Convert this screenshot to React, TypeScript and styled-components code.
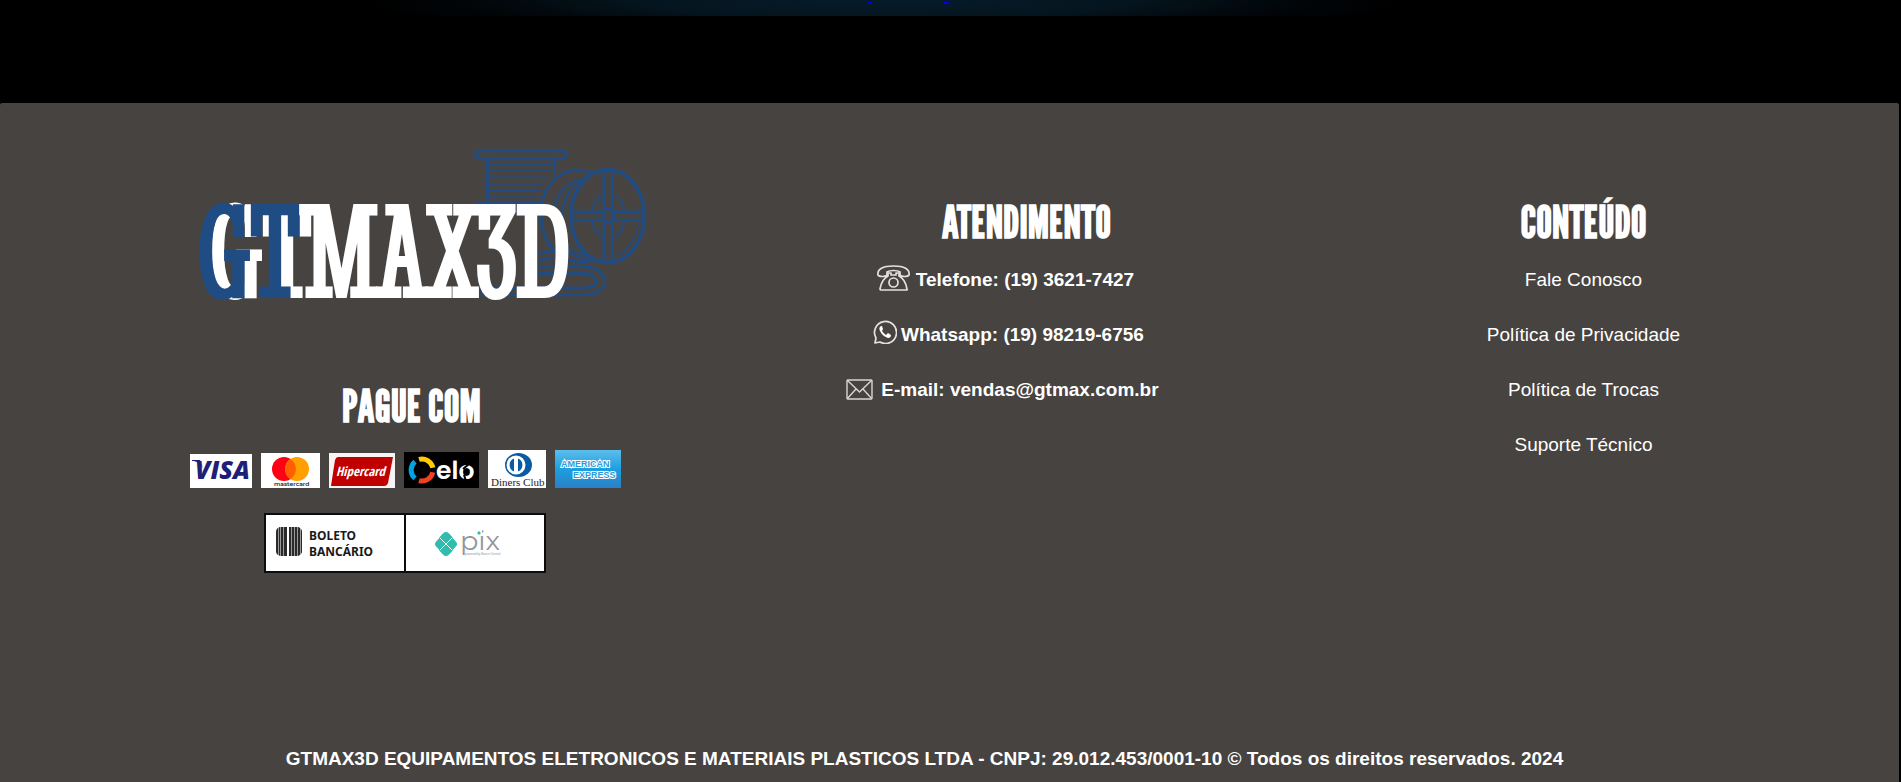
import React from "react";
import styled, { createGlobalStyle } from "styled-components";

const GlobalStyle = createGlobalStyle`
  *, *::before, *::after { box-sizing: border-box; }
  body {
    margin: 0;
    background: #000;
    color: #fff;
    font-family: Arial, "Liberation Sans", sans-serif;
  }
`;

const Page = styled.div`
  background: #000;
`;

const Banner = styled.div`
  display: flex;
  justify-content: center;
  gap: 72px;
  height: 16px;
  margin: 0 26% 0 19%;
  padding: 2px 0 0 48px;
  background: radial-gradient(ellipse 50% 260% at 50% 0, #061b2a 0%, #05151f 45%, #010508 80%, #000 100%);
`;

const BannerMark = styled.span`
  width: 5px;
  height: 2px;
  background: #0000ee;
`;

const FooterBox = styled.footer`
  margin: 87px 2px 0 0;
  padding: 27px 0 7px;
  border-radius: 2px 2px 0 0;
  background: #474340;
`;

const Columns = styled.div`
  display: grid;
  grid-template-columns: 59fr 60fr 56fr;
  padding: 0 2% 0 6%;
`;

const Column = styled.section<{ $top?: number; $indent?: number }>`
  display: flex;
  flex-direction: column;
  align-items: center;
  padding: ${(p) => p.$top ?? 0}px 0 0 ${(p) => p.$indent ?? 0}px;
`;

const Heading = styled.h2<{ $indent?: number }>`
  margin: 0 0 2px;
  padding-left: ${(p) => p.$indent ?? 0}px;
  font-family: "League Gothic", Anton, "Roboto Condensed", sans-serif;
  font-size: 44px;
  font-weight: 700;
  line-height: 56px;
`;

const List = styled.ul`
  margin: 0;
  padding: 0;
  list-style: none;
  text-align: center;
  font-size: 19px;
  line-height: 55px;
`;

const ContactItem = styled.li<{ $gap: number; $indent: number }>`
  display: flex;
  align-items: center;
  justify-content: center;
  gap: ${(p) => p.$gap}px;
  height: 55px;
  padding-left: ${(p) => p.$indent}px;
  font-weight: 700;
`;

const FooterLink = styled.a`
  color: #fff;
  text-decoration: none;
`;

const Cards = styled.div`
  display: flex;
  align-items: flex-end;
  gap: 9px;
  margin-top: 14px;
  padding-right: 5px;
`;

const Slips = styled.div`
  display: flex;
  gap: 2px;
  margin: 25px 6px 0 0;
  padding: 2px;
  background: #0c0c0c;
`;

const Art = styled.svg<{ $raise?: number }>`
  display: block;
  flex: none;
  overflow: hidden;
  margin-bottom: ${(p) => p.$raise ?? 0}px;
`;

const Copyright = styled.p`
  margin: 170px 0 0;
  padding-right: 50px;
  text-align: center;
  font-size: 19px;
  font-weight: 700;
  line-height: 32px;
`;

const BLUE = "#204c84";

function Spools() {
  return (
    <svg x="0" y="0" width="480" height="190" viewBox="0 0 1440 570" fill="none" stroke={BLUE} strokeWidth="9">
      <rect x="887" y="62" width="272" height="24" rx="12" />
      <path d="M923 86V212M1124 86V130" />
      <path strokeWidth="5" d="M928 104H1120M928 123H1122M928 142H1106M928 162H1092M928 181H1082M928 198H1078" />
      <path d="M888 218H1086M900 240H1080" />
      <path d="M1232 128C1170 104 1112 140 1092 196C1070 268 1090 330 1128 366C1160 396 1200 402 1238 390" />
      <path d="M1216 148C1160 150 1122 192 1122 260M1210 150C1170 170 1146 212 1148 262" strokeWidth="7" />
      <path d="M1160 348C1180 366 1200 372 1216 370" strokeWidth="7" />
      <ellipse cx="1283" cy="258" rx="110" ry="139" strokeWidth="11" />
      <path d="M1272 122V236M1297 122V236M1272 278V392M1297 278V392M1176 246H1268M1176 271H1268M1300 246H1392M1300 271H1392" />
      <ellipse cx="1285" cy="257" rx="16" ry="21" />
      <path strokeWidth="6" d="M1266 196C1250 204 1240 220 1238 240M1304 196C1320 204 1330 220 1332 240M1266 320C1250 312 1240 296 1238 276M1304 320C1320 312 1330 296 1332 276" />
      <path strokeWidth="4" d="M1374 280C1368 324 1346 360 1312 376" />
      <path d="M1120 366H1090C1054 366 1054 410 1090 410H1210C1290 410 1300 494 1214 494H900" />
      <path d="M1120 386H1096C1080 388 1080 392 1096 392M1060 430H1206C1262 430 1266 474 1206 474H890" />
      <path d="M1150 366L1240 394" strokeWidth="7" />
    </svg>
  );
}

function Logo() {
  const face = `"Stint Ultra Condensed", "Roboto Condensed", "Liberation Serif", serif`;
  return (
    <Art width="480" height="190" viewBox="-12 0 480 190" role="img">
      <Spools />
      <g fontFamily={face} fontSize="134" fontWeight="700">
        <text x="30" y="166" fill="#fff">GT</text>
        <text x="18" y="166" fill={BLUE}>GT</text>
        <text x="126" y="166" fill="#fff">MAX3D</text>
      </g>
    </Art>
  );
}

function Visa() {
  return (
    <Art width="62" height="34">
      <rect width="62" height="34" fill="#fff" />
      <text x="5" y="25" fontFamily="'Open Sans', sans-serif" fontSize="25" fontWeight="800" fontStyle="italic" fill="#1f1f78">VISA</text>
      <path d="M2 6H10L13 14C10 9 7 7 2 7Z" fill="#1f1f78" />
    </Art>
  );
}

function Mastercard() {
  return (
    <Art width="59" height="35">
      <rect width="59" height="35" fill="#fff" />
      <circle cx="23" cy="16" r="12" fill="#ff0015" />
      <circle cx="36" cy="16" r="12" fill="#ff9f00" />
      <path d="M29.500 6A12 12 0 0 1 29.500 26A12 12 0 0 1 29.500 6Z" fill="#ff5f00" />
      <text x="13" y="33" fontFamily="Montserrat, Lato, sans-serif" fontSize="6" fontWeight="600" fill="#222">mastercard</text>
    </Art>
  );
}

function Hipercard() {
  return (
    <Art width="66" height="35">
      <rect width="66" height="35" fill="#f7f4f4" />
      <path d="M9 4H64L59 30Q58 33 55 33H2L6 7Q7 4 9 4Z" fill="#c00000" />
      <text x="7" y="23" fontFamily="'Open Sans Condensed', 'Open Sans', sans-serif" fontSize="13" fontWeight="400" fontStyle="italic" fill="#fff">Hipercard</text>
    </Art>
  );
}

function Elo() {
  return (
    <Art width="75" height="36">
      <rect width="75" height="36" fill="#000" />
      <g fill="none" strokeWidth="5">
        <path d="M15 7.400A11 11 0 0 1 28.800 15.700" stroke="#ffcb05" />
        <path d="M11 9.600A11 11 0 0 0 11 26.400" stroke="#00a4e0" />
        <path d="M15 28.600A11 11 0 0 0 28.800 20.300" stroke="#ef4123" />
      </g>
      <text x="32" y="27" fontFamily="Poppins, 'Open Sans', sans-serif" fontSize="25" fontWeight="600" fill="#fff">elo</text>
      <path d="M59 17L65 12M62 29L60 23" stroke="#000" strokeWidth="2" />
    </Art>
  );
}

function Diners() {
  return (
    <Art width="58" height="38">
      <rect width="58" height="38" fill="#fff" />
      <ellipse cx="30.500" cy="15" rx="13.500" ry="12" fill="#0a5ba5" />
      <circle cx="28" cy="15" r="9.500" fill="#fff" />
      <path d="M26 8.500A7 7 0 0 0 26 21.500ZM30 8.500A7 7 0 0 1 30 21.500Z" fill="#0a5ba5" />
      <text x="3" y="36" fontFamily="'Liberation Serif', serif" fontSize="11" fill="#222">Diners Club</text>
    </Art>
  );
}

function Amex() {
  return (
    <Art width="66" height="38">
      <defs>
        <linearGradient id="amex" x1="0" y1="0" x2="0" y2="1">
          <stop offset="0" stopColor="#5ebdeb" />
          <stop offset="0.500" stopColor="#1d9fdf" />
          <stop offset="1" stopColor="#2b80c6" />
        </linearGradient>
      </defs>
      <rect width="66" height="38" fill="url(#amex)" />
      <g fontFamily="'Liberation Sans', sans-serif" fontSize="9" fontWeight="700" fill="#2a9bdc" stroke="#fff" strokeWidth="2" paintOrder="stroke">
        <text x="6" y="17">AMERICAN</text>
        <text x="18" y="28">EXPRESS</text>
      </g>
    </Art>
  );
}

const BARS = [
  [0, 2], [3, 1], [5, 2], [8, 3], [13, 2], [16, 2], [19, 2], [22, 2], [25, 1],
];

function Boleto() {
  return (
    <Art width="138" height="56">
      <rect width="138" height="56" fill="#fff" />
      <clipPath id="bars"><rect x="10" y="12" width="26" height="29" rx="5" /></clipPath>
      <g clipPath="url(#bars)" fill="#2a2a2a">
        <rect x="10" y="12" width="10" height="29" fill="#999" />
        <rect x="23" y="12" width="13" height="29" fill="#999" />
        {BARS.map(([x, w]) => <rect key={x} x={10 + x} y="12" width={w} height="29" />)}
      </g>
      <g fontFamily="'Noto Sans', sans-serif" fontSize="12" fontWeight="700" fill="#1a1a1a">
        <text x="43" y="25">BOLETO</text>
        <text x="43" y="41">BANCÁRIO</text>
      </g>
    </Art>
  );
}

function Pix() {
  return (
    <Art width="138" height="56">
      <rect width="138" height="56" fill="#fff" />
      <g fill="#32bcad">
        <rect x="-6" y="-6" width="12" height="12" rx="4" transform="translate(40 24) rotate(45)" />
        <rect x="-6" y="-6" width="12" height="12" rx="4" transform="translate(40 34) rotate(45)" />
        <rect x="-6" y="-6" width="12" height="12" rx="4" transform="translate(36 29) rotate(45)" />
        <rect x="-6" y="-6" width="12" height="12" rx="4" transform="translate(44 29) rotate(45)" />
      </g>
      <path d="M34 23L46 35M46 23L34 35" stroke="#fff" />
      <text x="54" y="35" fontFamily="Montserrat, Lato, sans-serif" fontSize="27" fontWeight="400" fill="#939598">pix</text>
      <rect x="70" y="12" width="6" height="7" fill="#fff" />
      <path d="M71 18L73 16L75 18L73 20Z" fill="#32bcad" />
      <text x="59" y="40" fontFamily="'Liberation Sans', sans-serif" fontSize="3" fill="#939598">powered by Banco Central</text>
    </Art>
  );
}

function PhoneIcon() {
  return (
    <Art $raise={4} width="33" height="26" viewBox="0 0 33 26" fill="none" stroke="#e4e2e0" strokeWidth="1.700" strokeLinejoin="round">
      <path d="M1 10C0 4 6 1 16.500 1C27 1 33 4 32 10C31 12 24 12 23 10V7C20 5 13 5 10 7V10C9 12 2 12 1 10Z" />
      <path d="M11 8V11C7 13 4 18 3 24Q3 25 5 25H29Q31 25 30 24C29 18 26 13 22 11V8H19V10H14V8Z" />
      <circle cx="16.500" cy="17.500" r="4.500" />
    </Art>
  );
}

function WhatsappIcon() {
  return (
    <Art $raise={5} width="24" height="24" viewBox="0 0 24 24" fill="none">
      <path d="M2 23L3 18A11 11 0 1 1 7 22Z" stroke="#e4e2e0" strokeWidth="1.700" strokeLinejoin="round" />
      <path d="M8 6C6 7 6 9 7 11C9 15 12 17 15 18C17 18 18 17 18 15L15 13L13 15C11 14 10 12 9 11L10 9L9 6Z" fill="#fff" />
    </Art>
  );
}

function MailIcon() {
  return (
    <Art width="27" height="21" viewBox="0 0 27 21" fill="none" stroke="#d8d6d4" strokeWidth="1.400">
      <rect x="1" y="1" width="25" height="19" rx="1" />
      <path d="M1 1L13.500 13L26 1M1 20L10 10M26 20L17 10" />
    </Art>
  );
}

const CONTACTS = [
  { icon: <PhoneIcon />, gap: 6, indent: 6, text: "Telefone: (19) 3621-7427" },
  { icon: <WhatsappIcon />, gap: 4, indent: 12, text: "Whatsapp: (19) 98219-6756" },
  { icon: <MailIcon />, gap: 8, indent: 0, text: "E-mail: vendas@gtmax.com.br" },
];

const LINKS = ["Fale Conosco", "Política de Privacidade", "Política de Trocas", "Suporte Técnico"];

export default function App() {
  return (
    <Page>
      <GlobalStyle />
      <Banner>
        <BannerMark />
        <BannerMark />
      </Banner>
      <FooterBox>
        <Columns>
          <Column>
            <Logo />
            <Column $top={58}>
              <Heading $indent={6}>PAGUE COM</Heading>
            </Column>
            <Cards>
              <Visa />
              <Mastercard />
              <Hipercard />
              <Elo />
              <Diners />
              <Amex />
            </Cards>
            <Slips>
              <Boleto />
              <Pix />
            </Slips>
          </Column>
          <Column $top={64}>
            <Heading $indent={48}>ATENDIMENTO</Heading>
            <List>
              {CONTACTS.map((c) => (
                <ContactItem key={c.text} $gap={c.gap} $indent={c.indent}>
                  {c.icon}
                  {c.text}
                </ContactItem>
              ))}
            </List>
          </Column>
          <Column $top={64} $indent={4}>
            <Heading>CONTEÚDO</Heading>
            <List>
              {LINKS.map((l) => (
                <li key={l}>
                  <FooterLink href="#">{l}</FooterLink>
                </li>
              ))}
            </List>
          </Column>
        </Columns>
        <Copyright>
          GTMAX3D EQUIPAMENTOS ELETRONICOS E MATERIAIS PLASTICOS LTDA - CNPJ: 29.012.453/0001-10 © Todos os direitos reservados. 2024
        </Copyright>
      </FooterBox>
    </Page>
  );
}
